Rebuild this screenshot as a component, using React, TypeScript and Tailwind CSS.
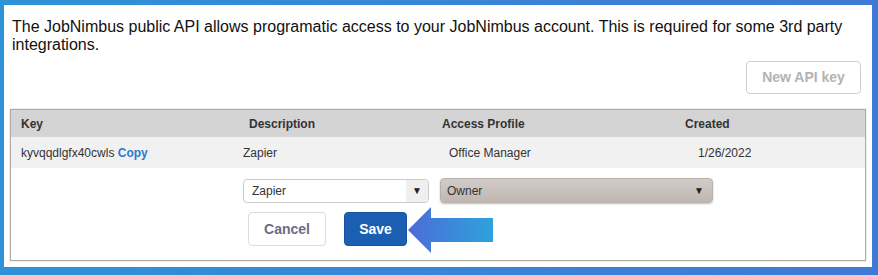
import React from "react";

export default function App() {
  const font = { fontFamily: '"Liberation Sans", Arial, Helvetica, sans-serif' };
  return (
    <div
      className="w-[878px] h-[275px] pt-[5px] pl-[4px] pr-[6px] pb-[8px] bg-gradient-to-r from-[#2d92d8] to-[#3f79d6]"
      style={font}
    >
      <div className="relative h-full w-full bg-white px-[6px] pt-[13px]">
        <p className="pl-[2px] text-[16px] leading-[18px] text-[#111] whitespace-nowrap">
          The JobNimbus public API allows programatic access to your JobNimbus account. This is required for some 3rd party
          <br />
          integrations.
        </p>
        <div className="mt-[7px] flex justify-end pr-[5px]">
          <button className="h-[33px] w-[115px] rounded-[4px] border border-[#cfcfcf] bg-white text-[14px] font-bold text-[#b3b3b3]">
            New API key
          </button>
        </div>
        <div className="mt-[15px] h-[152px] w-[856px] border border-[#ababab] shadow-[0_0_1px_#999]">
          <div className="flex h-[27px] items-center bg-[#d4d4d4] text-[12px] font-bold text-[#333]">
            <div className="w-[238px] pl-[10px]">Key</div>
            <div className="w-[193px]">Description</div>
            <div className="w-[243px]">Access Profile</div>
            <div className="flex-1">Created</div>
          </div>
          <div className="flex h-[31px] items-center bg-[#f1f1f1] text-[12px] text-[#333]">
            <div className="w-[232px] pl-[10px]">
              kyvqqdlgfx40cwls <span className="font-bold text-[#2a78cf]">Copy</span>
            </div>
            <div className="w-[206px]">Zapier</div>
            <div className="w-[249px]">Office Manager</div>
            <div className="flex-1">1/26/2022</div>
          </div>
          <div className="pl-[232px] pt-[10px]">
            <div className="flex items-center gap-[11px]">
              <div className="flex h-[24px] w-[186px] overflow-hidden rounded-[4px] border border-[#cccccc] bg-white text-[12px] text-[#333]">
                <div className="flex flex-1 items-center pl-[8px]">Zapier</div>
                <div className="flex w-[22px] items-center justify-center bg-[#efefef] text-[10px] text-[#222]">▼</div>
              </div>
              <div className="flex h-[25px] w-[273px] items-center justify-between rounded-[4px] border border-[#b9b1ac] bg-gradient-to-b from-[#d2cbc7] to-[#c0b7b2] pl-[6px] pr-[8px] text-[12px] text-[#333] shadow-[0_1px_2px_rgba(0,0,0,0.25)]">
                <span>Owner</span>
                <span className="text-[10px] text-[#222]">▼</span>
              </div>
            </div>
            <div className="mt-[9px] flex gap-[18px] pl-[5px]">
              <button className="h-[34px] w-[78px] rounded-[4px] border border-[#dcdcdc] bg-white text-[14px] font-bold text-[#6c6c84]">
                Cancel
              </button>
              <button className="h-[34px] w-[63px] rounded-[4px] border border-[#17549f] bg-[#1b5fb3] text-[14px] font-bold text-white">
                Save
              </button>
            </div>
          </div>
        </div>
        <svg
          className="absolute left-[404px] top-[202px]"
          width="90"
          height="48"
          viewBox="404 202 90 48"
        >
          <defs>
            <linearGradient id="ag" x1="0" y1="0" x2="1" y2="0">
              <stop offset="0" stopColor="#4c6cd7" />
              <stop offset="1" stopColor="#2ea2dc" />
            </linearGradient>
          </defs>
          <polygon
            points="404,225 427,202 427,213 489,213 489,237 427,237 427,248"
            fill="url(#ag)"
          />
        </svg>
      </div>
    </div>
  );
}
